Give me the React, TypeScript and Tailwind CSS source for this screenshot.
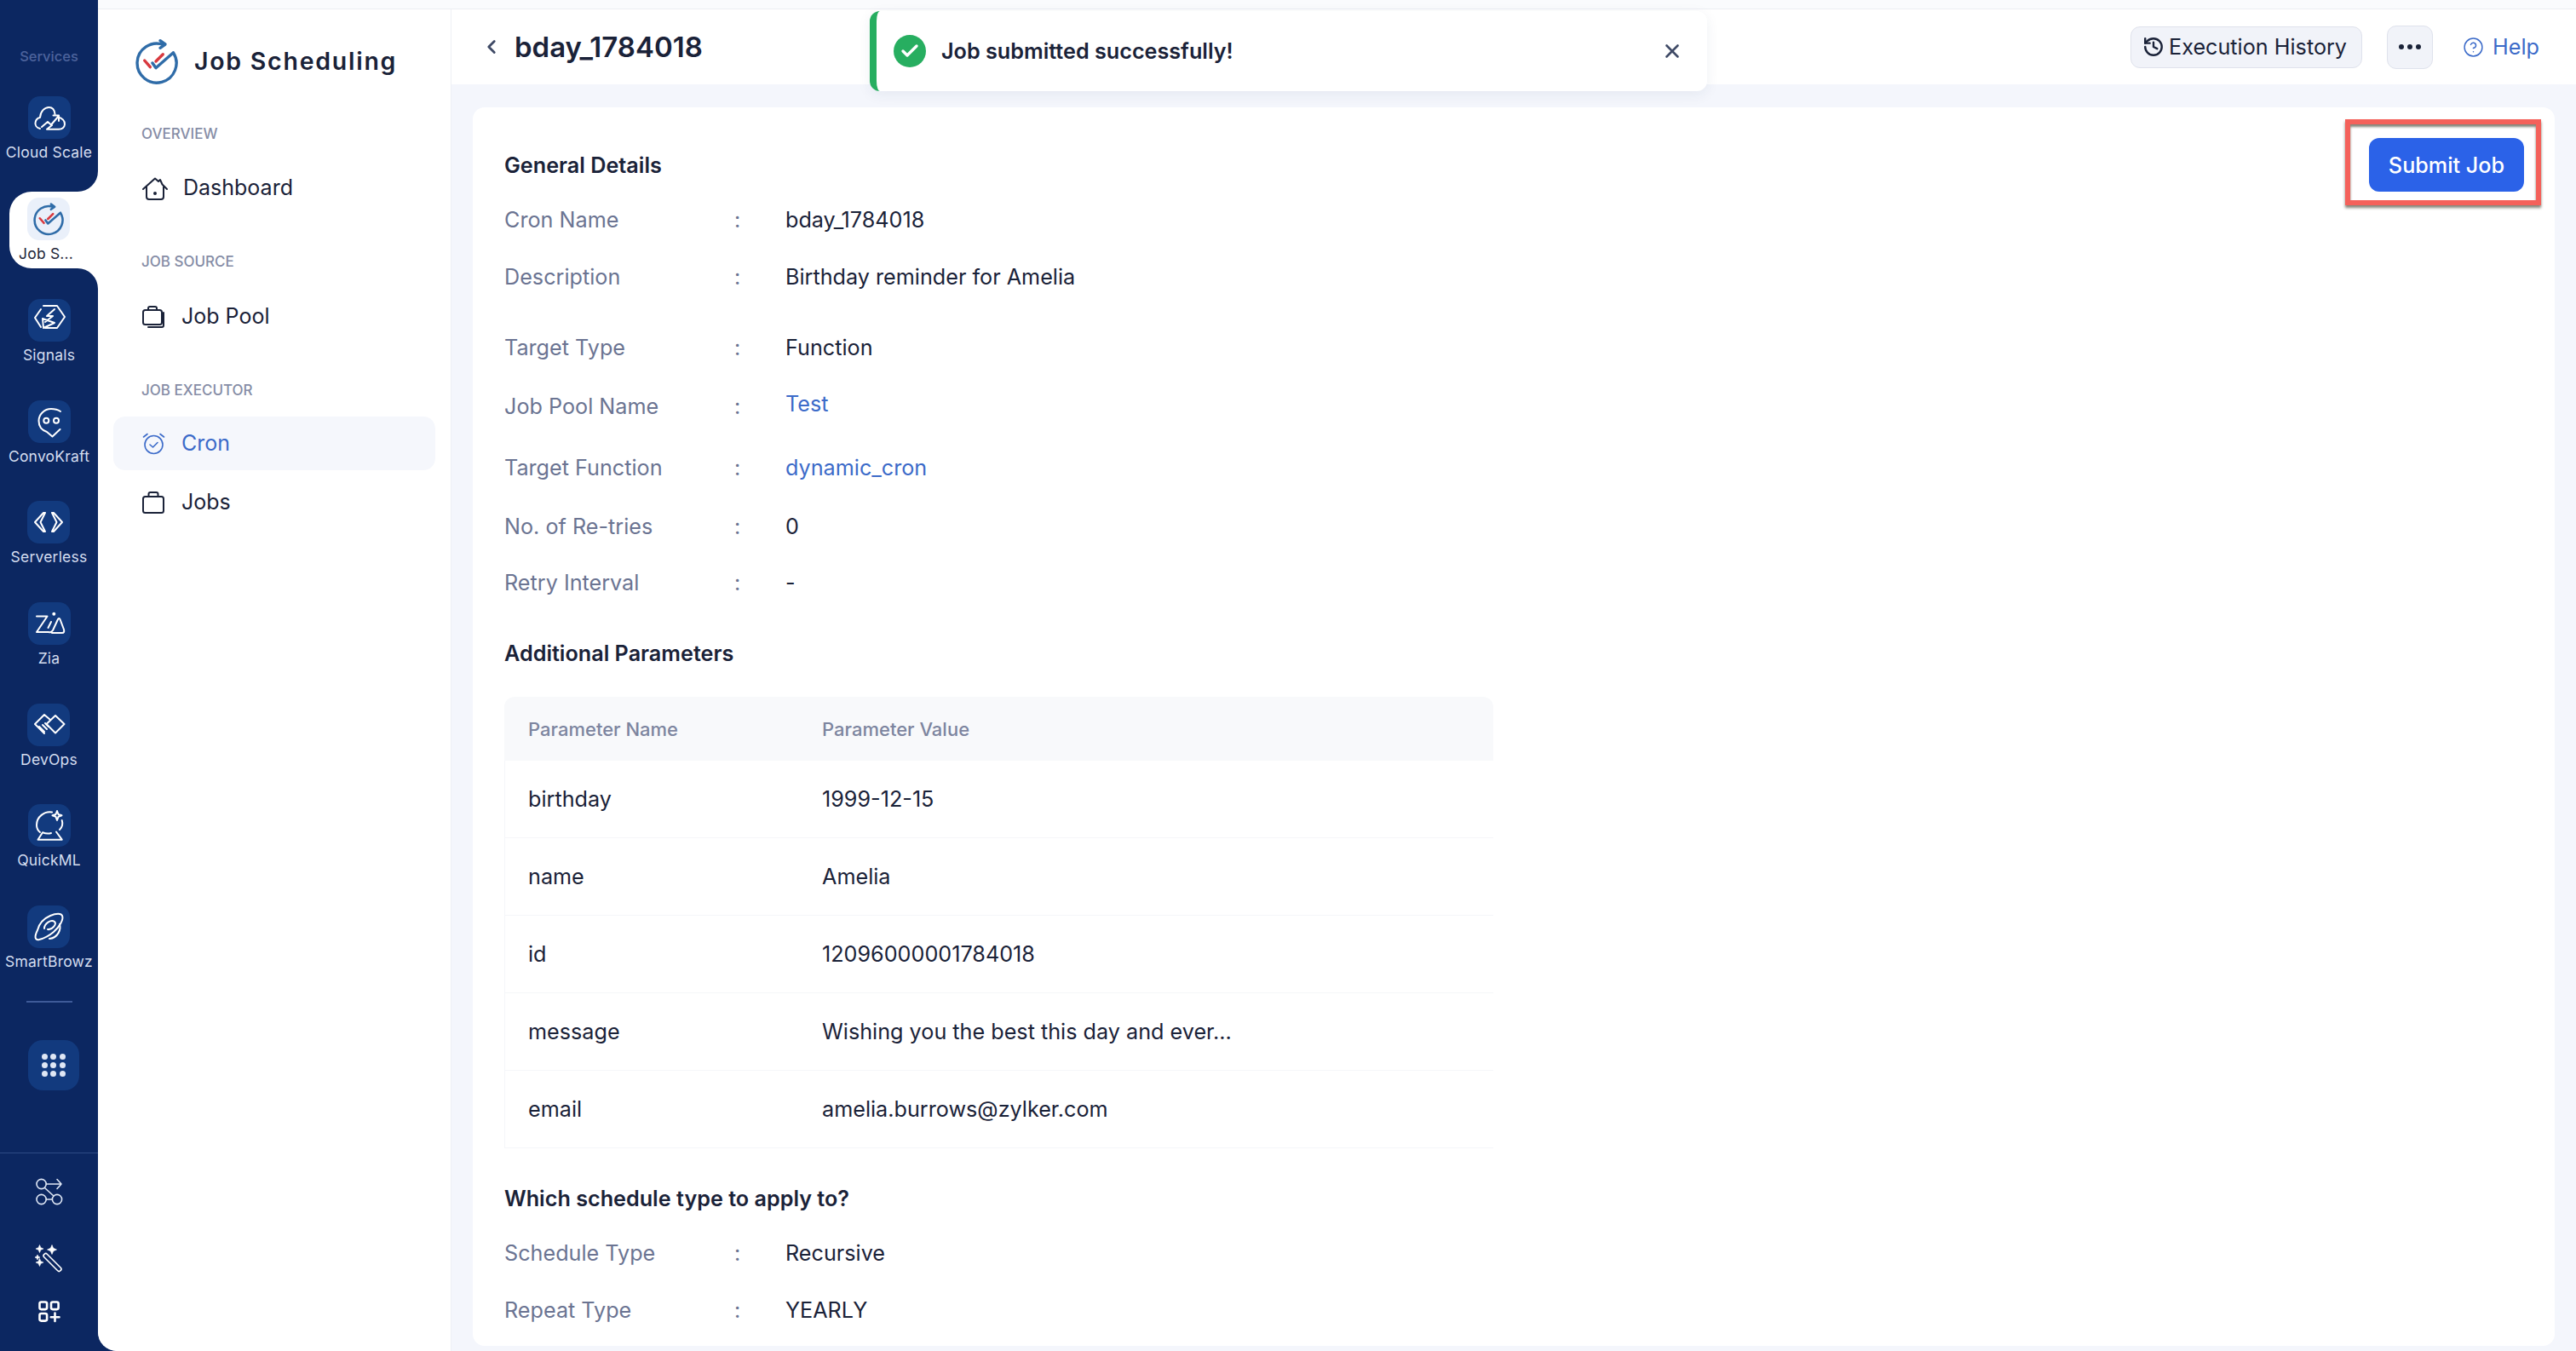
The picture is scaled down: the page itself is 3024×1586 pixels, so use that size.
import { ReactNode } from "react";
import { ChevronLeft, CircleHelp, History, X, Check } from "lucide-react";

const Logo = ({ size, stroke = 3.4 }: { size: number; stroke?: number }) => (
  <svg width={size} height={size} viewBox="-28 -30 56 56" fill="none" strokeLinecap="round" strokeLinejoin="round">
    <path d="M8 -21.5A23 23 0 1 0 19.5 -12.2L-1 5.7L-5 0" stroke="#2f6ca8" strokeWidth={stroke} />
    <path d="M4 -26.3L10 -22L4 -17.7" stroke="#2f6ca8" strokeWidth={stroke} />
    <path d="M-14.3 -3L-7.7 4.7M-1 -2L7.3 -10.3" stroke="#d8393f" strokeWidth={stroke} />
  </svg>
);

const TileIcon = ({ children }: { children: ReactNode }) => (
  <svg width="50" height="50" viewBox="0 0 50 50" fill="none" stroke="#ffffff" strokeWidth="2" strokeLinecap="round" strokeLinejoin="round">
    {children}
  </svg>
);

const icons: Record<string, ReactNode> = {
  cloud: (
    <TileIcon>
      <path d="M14 38C10 37 8 34 8.5 31C9 27.5 11 25.5 14 25C14.5 17.5 19.5 13 24.5 13C28.5 13 31 16 31.5 21M35 24.5C40 25.5 43.5 29 43 33C42.5 37 39.5 38.7 36 38.7H22L28 34" />
      <path d="M16 36L23 30L27 33.5L36 23M29.5 22.5H36V29" />
    </TileIcon>
  ),
  signals: (
    <TileIcon>
      <path d="M15 12L8 22L15 33M18 8H34L43 21L34 34H20" />
      <path d="M31 12L22 20H29L20 27M17 23L31 28L18 34Z" />
    </TileIcon>
  ),
  convo: (
    <TileIcon>
      <path d="M38 13C35 11 31 10 27 10C19 10 12.5 16.5 12.5 24C12.5 30 16 35 22 37L28.5 42.5L37.5 34" />
      <circle cx="21.3" cy="23.7" r="3" />
      <circle cx="33" cy="23.7" r="3" />
    </TileIcon>
  ),
  serverless: (
    <TileIcon>
      <path d="M21 14H19L9 25L19 36H21L15.5 25Z" />
      <path d="M29 14H31L41 25L31 36H29L34.5 25Z" />
    </TileIcon>
  ),
  zia: (
    <TileIcon>
      <path d="M10 16.5H22.5L10 35H24Q27 36 29 33L35 20Q36 18 37.5 20L42 32Q43 36 40 36H28" />
      <path d="M27 23L23.5 30" />
      <circle cx="30.3" cy="13.7" r="1" fill="#ffffff" />
    </TileIcon>
  ),
  devops: (
    <TileIcon>
      <path d="M33 14L43.5 24L33 34.5L22.5 24Z" />
      <path d="M27 19L20 13L9 24L20 35M14 27L20 33M18 25L23 30M21 23L25 27" />
    </TileIcon>
  ),
  quickml: (
    <TileIcon>
      <path d="M28 9.5C19 8 10 15 10 24.5C10 28 11.5 31 14 33M39.7 19C41 23 40 27 37 30" />
      <path d="M11.5 41.7H39.7L33 32.5M11.5 41.7L17 33.3C20 34.5 24 35 27 34" />
      <path d="M34 8L35.5 12L39.5 13.3L35.5 14.8L34 19L32.5 14.8L28.5 13.3L32.5 12Z" />
    </TileIcon>
  ),
  smart: (
    <TileIcon>
      <path d="M12 29C8 37 9 41 14 40C18 39 24 37 31 31C38 25 43 16 41 12C40 9 34 9 27 12C20 15 14 21 12 29Z" />
      <path d="M20 27C20 21 28 16 32 19C35 22 29 29 24 28" />
      <path d="M38 22C40 28 36 38 26 39" />
    </TileIcon>
  ),
};

const services = [
  { label: "Signals", icon: "signals" },
  { label: "ConvoKraft", icon: "convo" },
  { label: "Serverless", icon: "serverless" },
  { label: "Zia", icon: "zia" },
  { label: "DevOps", icon: "devops" },
  { label: "QuickML", icon: "quickml" },
  { label: "SmartBrowz", icon: "smart" },
];

const ServiceItem = ({ label, icon }: { label: string; icon: string }) => (
  <div className="flex h-[80px] flex-col items-center">
    <div className="flex h-[50px] w-[50px] items-center justify-center rounded-[14px] bg-[#123a7e]">{icons[icon]}</div>
    <span className="mt-[2px] whitespace-nowrap text-[17.5px] leading-[28px] tracking-[0.2px] text-[#d5def0]">{label}</span>
  </div>
);

const Sparkle = ({ x, y, r }: { x: number; y: number; r: number }) => (
  <path
    d={`M${x} ${y - r}L${x + r * 0.3} ${y - r * 0.3}L${x + r} ${y}L${x + r * 0.3} ${y + r * 0.3}L${x} ${y + r}L${x - r * 0.3} ${y + r * 0.3}L${x - r} ${y}L${x - r * 0.3} ${y - r * 0.3}Z`}
  />
);

const Sidebar = () => (
  <div className="flex w-[115px] shrink-0 flex-col">
    <div className="bg-white">
      <div className="flex h-[225px] flex-col items-center rounded-br-[24px] bg-[#0c2761]">
        <span className="mt-[54px] text-[16.5px] font-medium leading-[24px] text-[#4c639c]">Services</span>
        <div className="mt-[35px]">
          <ServiceItem label="Cloud Scale" icon="cloud" />
        </div>
      </div>
      <div className="bg-[#0c2761]">
        <div className="ml-[11px] flex h-[90px] flex-col rounded-l-[26px] bg-white pt-[7px]">
          <div className="ml-[21px] flex h-[50px] w-[50px] items-center justify-center rounded-[14px] bg-[#eaf0fa]">
            <Logo size={40} stroke={3.6} />
          </div>
          <span className="ml-[11px] mt-[3px] text-[17.5px] leading-[26px] tracking-[0.2px] text-[#1e2638]">Job S...</span>
        </div>
      </div>
      <div className="flex flex-col items-center gap-[38.7px] rounded-tr-[24px] bg-[#0c2761] pt-[36px]">
        {services.map((s) => (
          <ServiceItem key={s.label} label={s.label} icon={s.icon} />
        ))}
      </div>
    </div>
    <div className="mx-auto mt-[32px] h-[2px] w-[54px] shrink-0 bg-[#3e5a98]" />
    <div className="ml-[33px] mt-[44px] grid h-[59px] w-[60px] shrink-0 grid-cols-3 content-center justify-center gap-x-[3px] gap-y-[3px] rounded-[17px] bg-[#123a7e] px-[16px]">
      {Array.from({ length: 9 }).map((_, i) => (
        <span key={i} className="h-[7px] w-[7px] rounded-full bg-[#dfe7f5]" />
      ))}
    </div>
    <div className="mt-[73px] h-[1px] shrink-0 bg-[#2e4a85]" />
    <div className="flex flex-col items-center">
      <svg className="mt-[26px]" width="36" height="36" viewBox="0 0 36 36" fill="none" stroke="#dfe7f5" strokeWidth="1.6" strokeLinecap="round" strokeLinejoin="round">
        <circle cx="8.6" cy="10" r="5.6" />
        <circle cx="8.6" cy="28" r="5.6" />
        <circle cx="27" cy="28" r="5.6" />
        <path d="M14.5 10H32M27 4.5L32 10L27 15.5M12.5 14.5L23 24M14.4 28H21.2" />
      </svg>
      <svg className="mt-[43px]" width="36" height="36" viewBox="0 0 36 36" fill="#ffffff" stroke="#ffffff" strokeWidth="0.6" strokeLinejoin="round">
        <Sparkle x={6.5} y={7} r={4.5} />
        <Sparkle x={21} y={8} r={5.5} />
        <Sparkle x={4} y={17} r={3} />
        <Sparkle x={6.5} y={23} r={4.5} />
        <rect x="19" y="9.5" width="5" height="27" rx="2.2" transform="rotate(-45 21.5 23)" fill="none" strokeWidth="1.6" />
      </svg>
      <svg className="mt-[32px]" width="26" height="26" viewBox="0 0 26 26" fill="none" stroke="#ffffff" strokeWidth="2.6" strokeLinecap="round" strokeLinejoin="round">
        <rect x="1.5" y="1.5" width="8.6" height="8.6" rx="2" />
        <rect x="15" y="1.5" width="8.6" height="8.6" rx="2" />
        <rect x="1.5" y="15" width="8.6" height="8.6" rx="2" />
        <path d="M19.5 14.5V24M14.8 19.2H24.5" />
      </svg>
    </div>
  </div>
);

const navStroke = {
  fill: "none",
  stroke: "currentColor",
  strokeWidth: 2,
  strokeLinecap: "round" as const,
  strokeLinejoin: "round" as const,
};

const NavPanel = () => (
  <div className="flex w-[415px] shrink-0 flex-col rounded-bl-[22px] border-r border-[#eef0f5] bg-white">
    <div className="ml-[41px] mt-[31px] flex h-[60px] shrink-0 items-center">
      <Logo size={56} />
      <span className="ml-[16px] text-[28.5px] font-semibold tracking-[1.75px] text-[#1a2238]">Job Scheduling</span>
    </div>
    <div className="ml-[51px] mt-[44px] flex h-[24px] items-center text-[17px] font-medium text-[#868da6]">OVERVIEW</div>
    <div className="ml-[52px] mt-[38px] flex h-[26px] items-center text-[#1a2238]">
      <svg width="30" height="27" viewBox="0 0 30 27" {...navStroke}>
        <path d="M1 14L15 1.5L19 5L21 3L23.5 8.5L29 14" />
        <path d="M5 11.5V23A3 3 0 0 0 8 26H22A3 3 0 0 0 25 23V11.5" />
        <circle cx="15" cy="19" r="1" fill="currentColor" />
      </svg>
      <span className="ml-[18px] text-[25px]">Dashboard</span>
    </div>
    <div className="ml-[51px] mt-[62px] flex h-[24px] items-center text-[17px] font-medium text-[#868da6]">JOB SOURCE</div>
    <div className="ml-[52px] mt-[38px] flex h-[28px] items-center text-[#1a2238]">
      <svg width="26" height="26" viewBox="0 0 26 26" {...navStroke}>
        <rect x="1" y="5" width="22" height="17" rx="2.5" />
        <path d="M7 5V3A2 2 0 0 1 9 1H15A2 2 0 0 1 17 3V5M25 8V23A2 2 0 0 1 23 25H7" />
      </svg>
      <span className="ml-[20px] text-[25px]">Job Pool</span>
    </div>
    <div className="ml-[51px] mt-[61px] flex h-[24px] items-center text-[17px] font-medium text-[#868da6]">JOB EXECUTOR</div>
    <div className="ml-[18px] mr-[18px] mt-[18px] flex h-[63px] items-center rounded-[14px] bg-[#f5f7fc] pl-[34px] text-[#3c6bc9]">
      <svg width="27" height="27" viewBox="0 0 27 27" {...navStroke} strokeWidth={1.6}>
        <circle cx="13.5" cy="15" r="10.5" />
        <path d="M9 15L12.5 18L18 12.5M1.5 6L6 2.5M25.5 6L21 2.5" />
      </svg>
      <span className="ml-[19px] text-[25px]">Cron</span>
    </div>
    <div className="ml-[52px] mt-[24px] flex h-[28px] items-center text-[#1a2238]">
      <svg width="26" height="26" viewBox="0 0 26 26" {...navStroke}>
        <rect x="1" y="6" width="24" height="19" rx="2.5" />
        <path d="M7.5 6V3A2 2 0 0 1 9.5 1H16.5A2 2 0 0 1 18.5 3V6" />
      </svg>
      <span className="ml-[20px] text-[25px]">Jobs</span>
    </div>
  </div>
);

type RowProps = { label: string; value: string; link?: boolean; raised?: boolean; className: string };

const DetailRow = ({ label, value, link, raised, className }: RowProps) => (
  <div className={`flex h-[40px] items-center text-[25.2px] ${className}`}>
    <span className="w-[270px] text-[#6b7492]">{label}</span>
    <span className="w-[60px] text-[#6b7492]">:</span>
    <span className={`${link ? "text-[#3c6bc9]" : "text-[#1a2238]"} ${raised ? "pb-[6px]" : ""}`}>{value}</span>
  </div>
);

const SectionTitle = ({ children, className }: { children: ReactNode; className: string }) => (
  <div className={`flex h-[40px] items-center text-[25.2px] font-semibold text-[#1a2238] ${className}`}>{children}</div>
);

const params = [
  ["birthday", "1999-12-15"],
  ["name", "Amelia"],
  ["id", "12096000001784018"],
  ["message", "Wishing you the best this day and ever..."],
  ["email", "amelia.burrows@zylker.com"],
];

const ParamTable = () => (
  <div className="mt-[30px] w-[1161px] text-[25.2px] text-[#1a2238]">
    <div className="flex h-[75px] items-center rounded-t-[12px] bg-[#f8f9fb] pl-[28px] pt-[2px] text-[22px] font-medium text-[#7d859f]">
      <span className="w-[345px]">Parameter Name</span>
      <span>Parameter Value</span>
    </div>
    {params.map(([name, value]) => (
      <div key={name} className="flex h-[91px] items-center border-b border-l border-[#f5f6f9] pl-[27px] pt-[2px]">
        <span className="w-[345px]">{name}</span>
        <span>{value}</span>
      </div>
    ))}
  </div>
);

const Toast = () => (
  <div className="absolute left-[491px] top-[13px] flex h-[94px] w-[983px] items-center rounded-[12px] border-l-[8px] border-[#27ae60] bg-white shadow-[0_4px_16px_rgba(30,50,100,0.07)]">
    <div className="ml-[20px] flex h-[38px] w-[38px] items-center justify-center rounded-full bg-[#27ae60]">
      <Check size={24} strokeWidth={3.4} color="#ffffff" />
    </div>
    <span className="ml-[18px] mt-[2px] text-[25.2px] font-semibold text-[#1a2238]">Job submitted successfully!</span>
    <X size={26} strokeWidth={2.4} color="#3f4a66" className="ml-auto mr-[28px]" />
  </div>
);

const Header = () => (
  <div className="flex h-[88px] shrink-0 items-center bg-white pl-[34px] pr-[43px]">
    <ChevronLeft size={26} strokeWidth={2.6} color="#3f4a66" />
    <span className="ml-[14px] mt-[2px] text-[33px] font-semibold text-[#1a2238]">bday_1784018</span>
    <div className="ml-auto flex h-[49px] w-[272px] items-center justify-center gap-[5px] rounded-[11px] border border-[#dfe2ec] bg-[#f1f3f9] pr-[4px] text-[25.2px] text-[#1a2238]">
      <History size={26} strokeWidth={2.2} />
      <span className="mt-[2px]">Execution History</span>
    </div>
    <div className="ml-[29px] flex h-[51px] w-[54px] items-center justify-center gap-[4px] rounded-[11px] border border-[#dfe2ec] bg-[#f1f3f9]">
      <span className="h-[6px] w-[6px] rounded-full bg-[#1a2238]" />
      <span className="h-[6px] w-[6px] rounded-full bg-[#1a2238]" />
      <span className="h-[6px] w-[6px] rounded-full bg-[#1a2238]" />
    </div>
    <CircleHelp size={25} strokeWidth={1.4} color="#3c6bc9" className="ml-[35px]" />
    <span className="ml-[10px] mt-[2px] text-[25.2px] text-[#3c6bc9]">Help</span>
  </div>
);

const DetailsCard = () => (
  <div className="mx-[25px] mt-[27px] flex h-[1454px] justify-between rounded-[14px] bg-white pl-[37px]">
    <div className="pt-[49px]">
      <SectionTitle className="">General Details</SectionTitle>
      <DetailRow className="mt-[24px]" label="Cron Name" value="bday_1784018" />
      <DetailRow className="mt-[27px]" label="Description" value="Birthday reminder for Amelia" />
      <DetailRow className="mt-[43px]" label="Target Type" value="Function" />
      <DetailRow className="mt-[29px]" label="Job Pool Name" value="Test" link raised />
      <DetailRow className="mt-[32px]" label="Target Function" value="dynamic_cron" link />
      <DetailRow className="mt-[29px]" label="No. of Re-tries" value="0" />
      <DetailRow className="mt-[26px]" label="Retry Interval" value="-" />
      <SectionTitle className="mt-[43px]">Additional Parameters</SectionTitle>
      <ParamTable />
      <SectionTitle className="mt-[40px]">Which schedule type to apply to?</SectionTitle>
      <DetailRow className="mt-[24px]" label="Schedule Type" value="Recursive" />
      <DetailRow className="mt-[27px]" label="Repeat Type" value="YEARLY" />
    </div>
    <div className="mr-[16px] mt-[14px] self-start border-[6px] border-[#f4615a] pb-[10px] pl-[22px] pr-[14px] pt-[16px] shadow-[0_3px_3px_rgba(50,50,30,0.6),inset_0_3px_3px_rgba(50,50,30,0.6)]">
      <div className="flex h-[63px] w-[182px] items-center justify-center rounded-[12px] bg-[#2b62e8] pt-[2px] text-[25.2px] font-medium text-white">
        Submit Job
      </div>
    </div>
  </div>
);

export default function App() {
  return (
    <div className="flex h-[1586px] w-[3024px] overflow-hidden bg-[#0c2761] [font-family:Inter,sans-serif]">
      <Sidebar />
      <div className="relative flex min-w-0 flex-1 flex-col overflow-hidden rounded-bl-[22px] bg-white">
        <div className="h-[11px] shrink-0 border-b border-[#eceef3] bg-[#fafbfd]" />
        <div className="flex min-h-0 flex-1">
          <NavPanel />
          <div className="flex min-w-0 flex-1 flex-col bg-[#f4f6fc]">
            <Header />
            <DetailsCard />
          </div>
        </div>
        <div className="absolute left-[415px] top-0 h-full w-[2494px]">
          <Toast />
        </div>
      </div>
    </div>
  );
}
